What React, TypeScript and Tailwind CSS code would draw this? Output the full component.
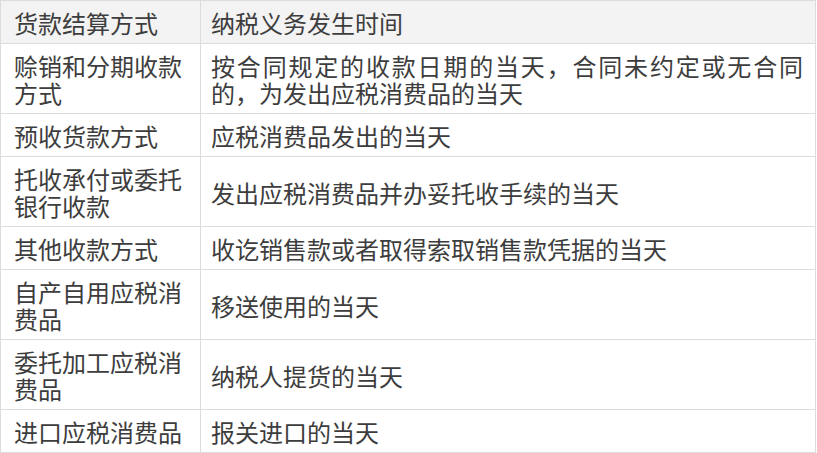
const rows: [string, string][] = [
  ['赊销和分期收款方式', '按合同规定的收款日期的当天，合同未约定或无合同的，为发出应税消费品的当天'],
  ['预收货款方式', '应税消费品发出的当天'],
  ['托收承付或委托银行收款', '发出应税消费品并办妥托收手续的当天'],
  ['其他收款方式', '收讫销售款或者取得索取销售款凭据的当天'],
  ['自产自用应税消费品', '移送使用的当天'],
  ['委托加工应税消费品', '纳税人提货的当天'],
  ['进口应税消费品', '报关进口的当天'],
];

export default function App() {
  return (
    <div className="bg-white w-[817px] h-[453px] overflow-hidden">
      <table
        className="w-[816px] table-fixed border-collapse text-[24px] leading-[27px] text-[#3d3d3d]"
        style={{ fontFamily: '"Noto Sans CJK SC", "Noto Sans", sans-serif' }}
      >
        <colgroup>
          <col className="w-[200px]" />
          <col />
        </colgroup>
        <thead>
          <tr className="bg-[#f3f3f3]">
            <th className="border border-[#dcdcdc] pl-[13px] pr-[10px] pt-[8px] pb-[7px] text-left font-normal align-middle">
              货款结算方式
            </th>
            <th className="border border-[#dcdcdc] pl-[10px] pr-[12px] pt-[8px] pb-[7px] text-left font-normal align-middle">
              纳税义务发生时间
            </th>
          </tr>
        </thead>
        <tbody>
          {rows.map(([method, time]) => (
            <tr key={method}>
              <td className="border border-[#dcdcdc] pl-[13px] pr-[10px] pt-[8px] pb-[7px] align-middle">{method}</td>
              <td className="border border-[#dcdcdc] pl-[10px] pr-[12px] pt-[8px] pb-[7px] align-middle text-justify">
                {time}
              </td>
            </tr>
          ))}
        </tbody>
      </table>
    </div>
  );
}
